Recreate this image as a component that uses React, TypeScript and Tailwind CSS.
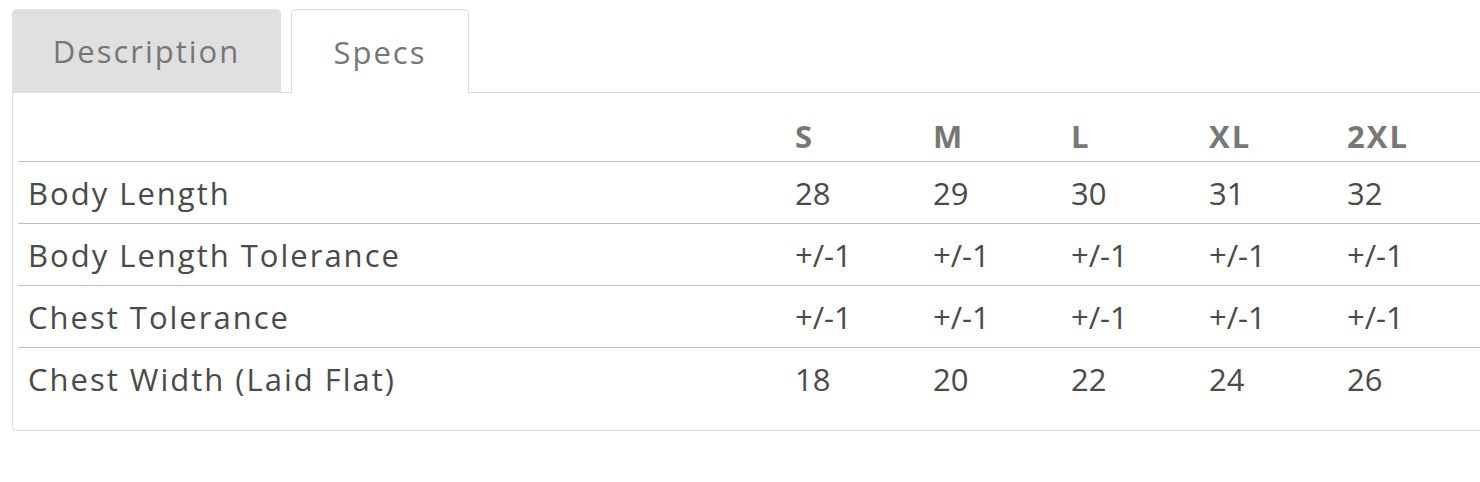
import React from 'react';

const sizes = ['S', 'M', 'L', 'XL', '2XL'];

const rows = [
  { label: 'Body Length', values: ['28', '29', '30', '31', '32'] },
  { label: 'Body Length Tolerance', values: ['+/-1', '+/-1', '+/-1', '+/-1', '+/-1'] },
  { label: 'Chest Tolerance', values: ['+/-1', '+/-1', '+/-1', '+/-1', '+/-1'] },
  { label: 'Chest Width (Laid Flat)', values: ['18', '20', '22', '24', '26'] },
];

export default function App() {
  return (
    <div
      className="w-[1480px] h-[482px] overflow-hidden bg-white pl-3 pt-[9px] text-[31px] tracking-[2px]"
      style={{ fontFamily: '"Open Sans", "Liberation Sans", sans-serif' }}
    >
      {/* tabs */}
      <div className="relative z-10 flex items-start gap-[10px]">
        <div className="w-[269px] h-[83px] bg-[#e0e0e0] rounded-t-[5px] flex items-center justify-center text-[#777] leading-[30px]">
          Description
        </div>
        <div className="w-[178px] h-[84px] bg-white border border-b-0 border-[#dcdcdc] rounded-t-[5px] flex items-center justify-center text-[#777] leading-[30px]">
          Specs
        </div>
      </div>

      {/* panel */}
      <div className="relative z-0 -mt-px w-[1500px] h-[339px] border-l border-t border-b border-[#dcdcdc] rounded-bl-[5px] pl-[5px]">
        <div className="grid grid-cols-[767px_138px_138px_138px_138px_1fr] h-[69px] items-end border-b border-[#bdbdbd] pb-[10px] font-bold text-[#777] leading-[30px]">
          <div />
          {sizes.map((s) => (
            <div key={s} className="pl-[10px]">{s}</div>
          ))}
        </div>
        {rows.map((r, i) => (
          <div
            key={r.label}
            className={
              i < rows.length - 1
                ? 'grid grid-cols-[767px_138px_138px_138px_138px_1fr] h-[62px] items-center border-b border-[#bdbdbd] text-[#4a4a4a] leading-[30px]'
                : 'grid grid-cols-[767px_138px_138px_138px_138px_1fr] h-[61px] items-center text-[#4a4a4a] leading-[30px]'
            }
          >
            <div className="pl-[10px]">{r.label}</div>
            {r.values.map((v, j) => (
              <div key={j} className="pl-[10px] tracking-normal">{v}</div>
            ))}
          </div>
        ))}
      </div>
    </div>
  );
}
